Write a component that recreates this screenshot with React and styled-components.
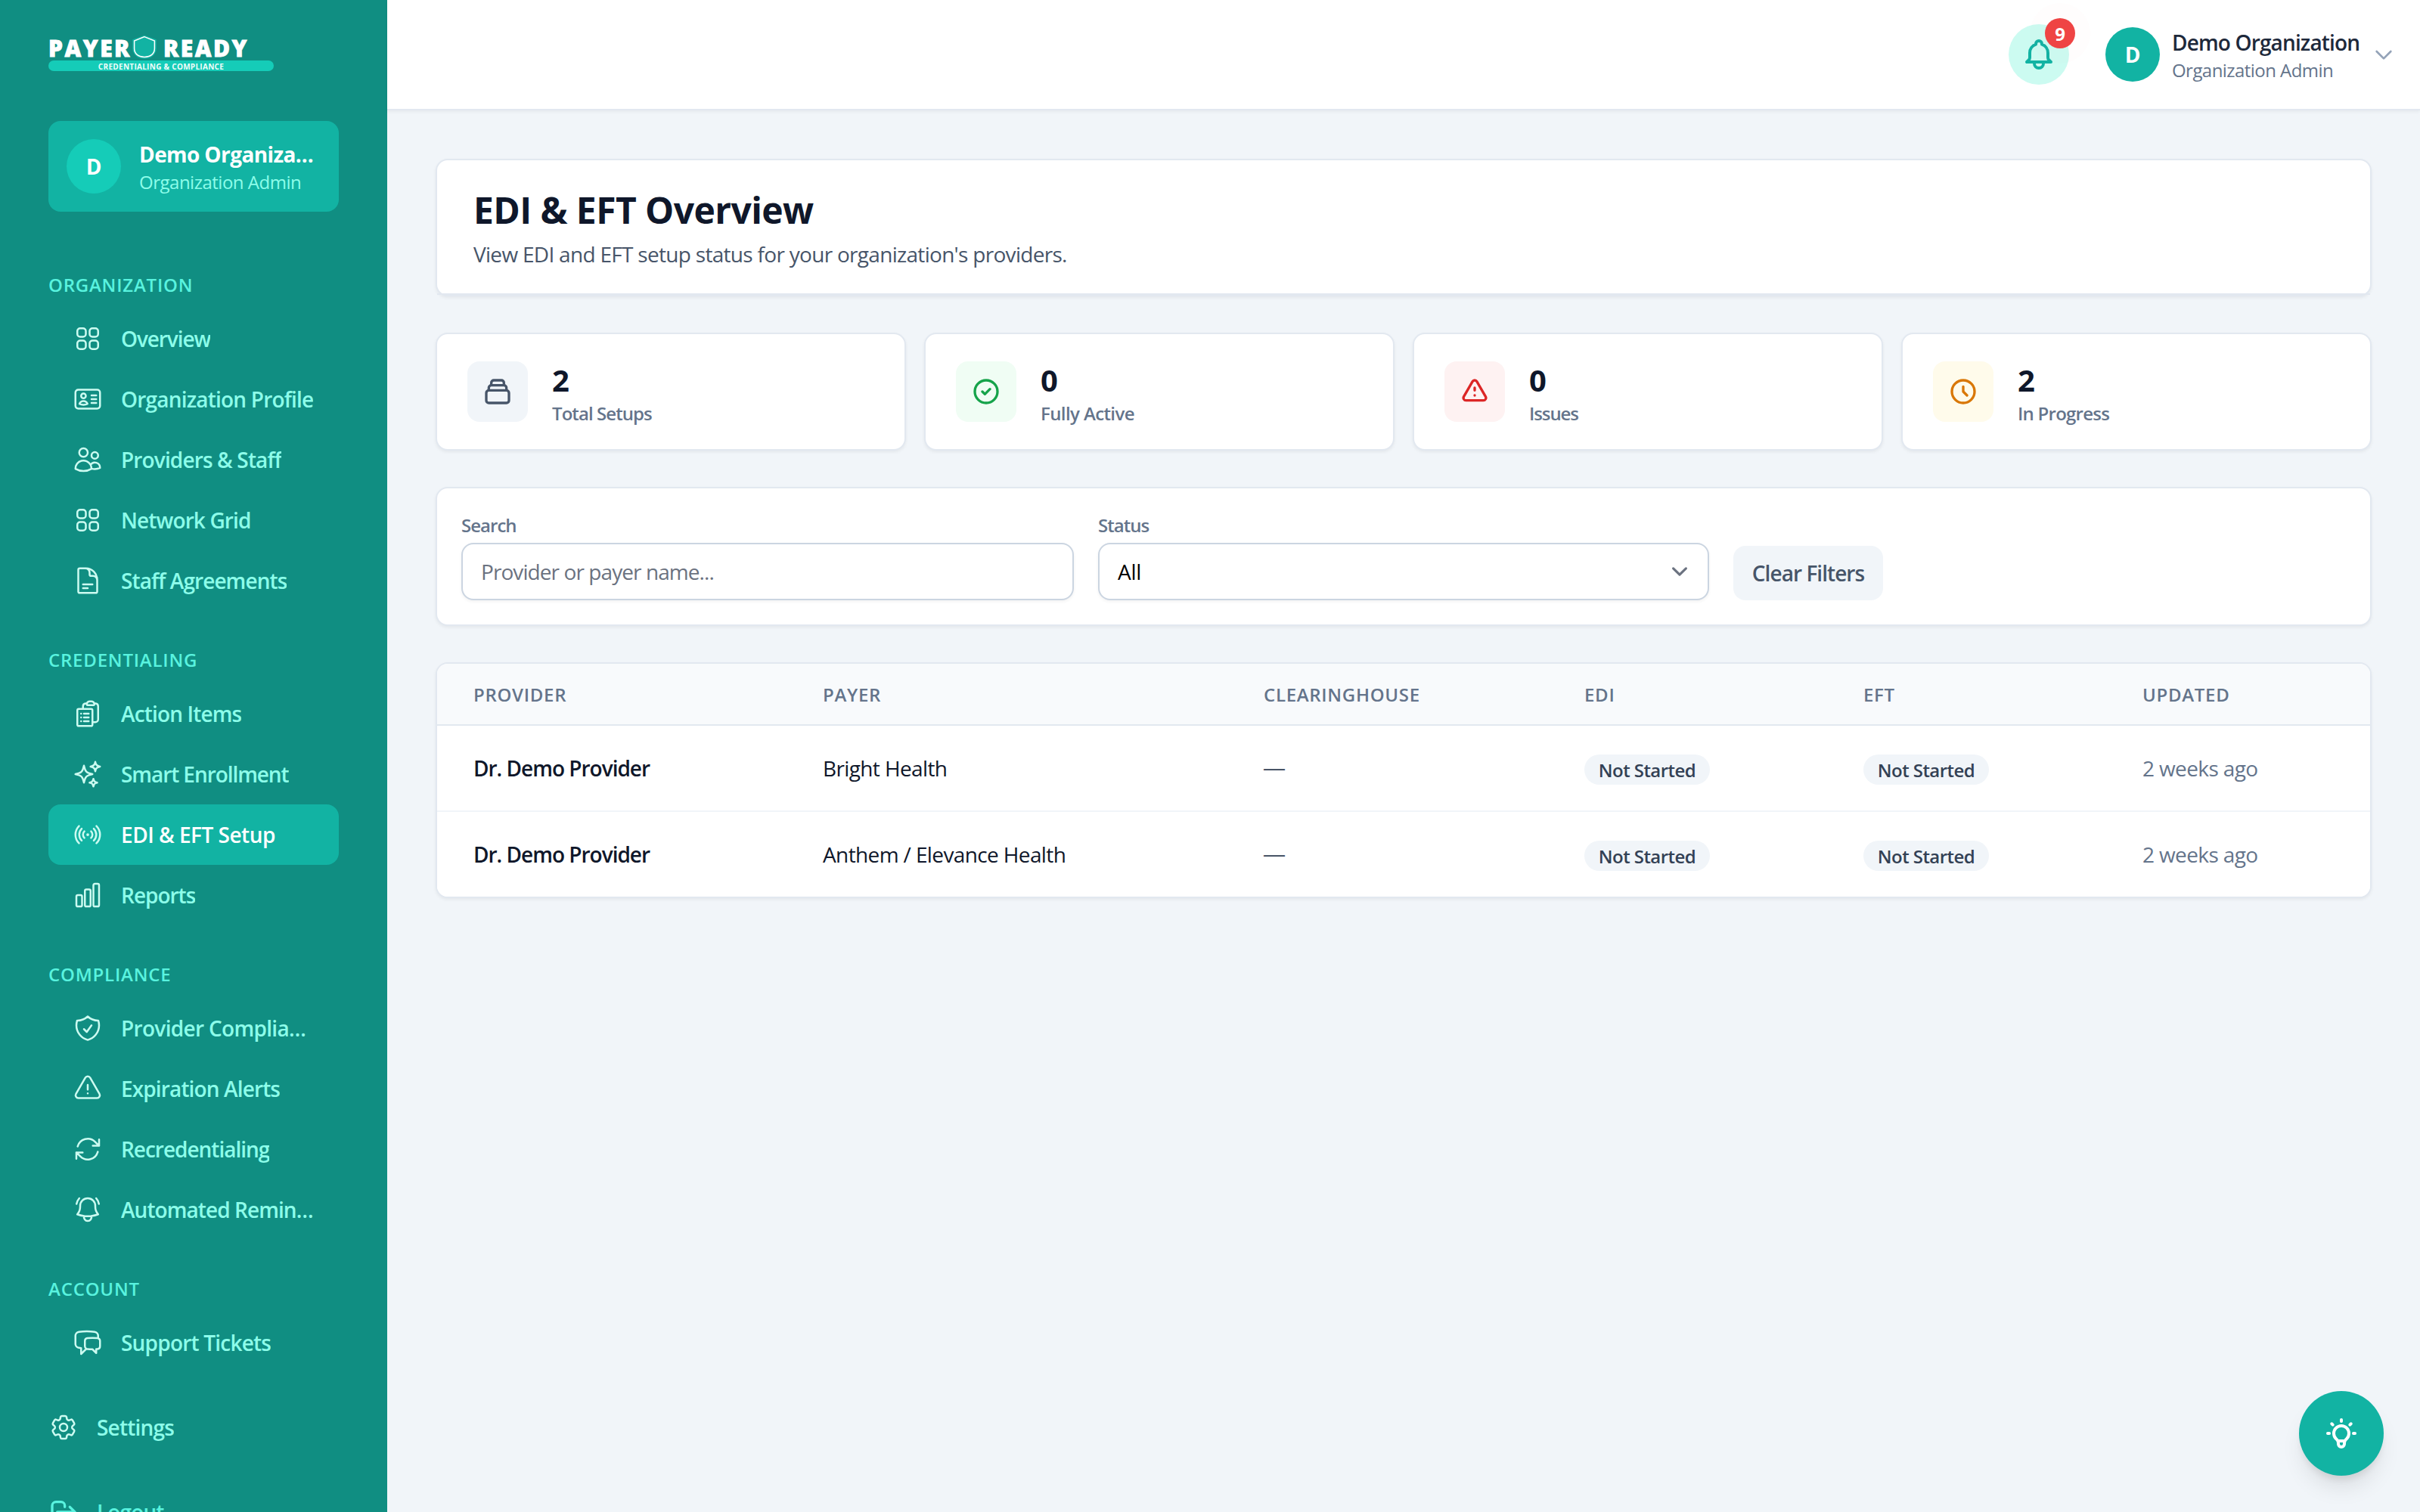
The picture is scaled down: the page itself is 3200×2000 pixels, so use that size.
import React from "react";
import styled, { createGlobalStyle, css, keyframes } from "styled-components";
import {
  HiOutlineSquares2X2,
  HiOutlineIdentification,
  HiOutlineUsers,
  HiOutlineDocumentText,
  HiOutlineClipboardDocumentList,
  HiOutlineSparkles,
  HiOutlineSignal,
  HiOutlineChartBar,
  HiOutlineShieldCheck,
  HiOutlineExclamationTriangle,
  HiOutlineArrowPath,
  HiOutlineBellAlert,
  HiOutlineChatBubbleLeftRight,
  HiOutlineCog6Tooth,
} from "react-icons/hi2";
import {
  HiOutlineBell,
  HiOutlineChevronDown,
  HiOutlineCollection,
  HiOutlineCheckCircle,
  HiOutlineExclamation,
  HiOutlineClock,
  HiOutlineLogout,
  HiOutlineLightBulb,
} from "react-icons/hi";

const GlobalStyle = createGlobalStyle`
  *, *::before, *::after {
    box-sizing: border-box;
  }
  body {
    margin: 0;
    background: #f1f5f9;
    color: #0f172a;
    font-family: "Open Sans", "Noto Sans", sans-serif;
    font-size: 28px;
    line-height: 40px;
  }
  h1, p {
    margin: 0;
  }
  svg {
    display: block;
    flex-shrink: 0;
  }
`;

const ellipsis = css`
  overflow: hidden;
  text-overflow: ellipsis;
  white-space: nowrap;
`;

const Page = styled.div`
  display: flex;
  height: 2000px;
  overflow: hidden;
`;

////////////////////////////Sidebar///////////////////////////////////////

const Sidebar = styled.aside`
  width: 512px;
  flex-shrink: 0;
  padding: 48px 64px 0;
  background: #108e82;
  overflow: hidden;
`;

const Brand = styled.div`
  width: 298px;
  height: 112px;
`;

const BrandWords = styled.div`
  display: flex;
  align-items: center;
  height: 32px;
  color: #ffffff;
  font-size: 30px;
  font-weight: 800;
  line-height: 32px;
  letter-spacing: 2.5px;
  -webkit-text-stroke: 0.8px #ffffff;
`;

const BrandShield = styled.svg`
  width: 32px;
  height: 32px;
  margin: -4px 9px 0 1px;
`;

const BrandTag = styled.div`
  height: 14px;
  border-radius: 7px;
  background: #15ccb8;
  color: #f0fdfa;
  font-size: 10px;
  font-weight: 700;
  line-height: 17px;
  letter-spacing: 0.29px;
  text-align: center;
`;

const OrgCard = styled.div`
  display: flex;
  align-items: center;
  gap: 24px;
  height: 120px;
  padding: 24px;
  border-radius: 16px;
  background: #12b3a3;
`;

const Avatar = styled.div`
  display: flex;
  align-items: center;
  justify-content: center;
  width: 72px;
  height: 72px;
  flex-shrink: 0;
  border-radius: 50%;
  background: ${(props) => (props.$light ? "#15ccb8" : "#12b3a3")};
  color: #ffffff;
  font-weight: 700;
`;

const OrgText = styled.div`
  min-width: 0;
`;

const OrgName = styled.p`
  ${ellipsis}
  color: #ffffff;
  font-weight: 700;
  letter-spacing: -0.6px;
`;

const OrgRole = styled.p`
  color: #8dfdea;
  font-size: 24px;
  line-height: 34px;
  height: 32px;
  letter-spacing: -0.49px;
`;

const NavGroup = styled.div`
  padding-top: 80px;

  & + & {
    padding-top: 48px;
  }
`;

const NavHeading = styled.p`
  height: 40px;
  margin-bottom: 8px;
  color: #59f3df;
  font-size: 24px;
  font-weight: 600;
  line-height: 33px;
  letter-spacing: 0.78px;
`;

const NavItem = styled.div`
  display: flex;
  align-items: center;
  gap: 24px;
  height: 80px;
  padding: 0 30px 0 ${(props) => (props.$root ? "0" : "32px")};
  margin-top: ${(props) => props.$gap || 0}px;
  border-radius: 16px;
  background: ${(props) => (props.$active ? "#12b3a3" : "transparent")};
  color: ${(props) => (props.$active ? "#ffffff" : "#8dfdea")};
  font-weight: 600;

  svg {
    width: 40px;
    height: 40px;
    color: ${(props) => (props.$muted ? "#59f3df" : "#ccfbf1")};
  }

  ${(props) =>
    props.$muted &&
    css`
      color: #59f3df;
    `}
`;

const NavLabel = styled.span`
  ${ellipsis}
  letter-spacing: ${(props) => props.$track ?? -0.88}px;
`;

////////////////////////////Top bar///////////////////////////////////////

const Content = styled.div`
  flex: 1;
  min-width: 0;
`;

const TopBar = styled.header`
  display: flex;
  align-items: center;
  justify-content: flex-end;
  height: 146px;
  padding-right: 32px;
  border-bottom: 2px solid #e2e8f0;
  background: #ffffff;
  box-shadow: 0 2px 4px rgba(0, 0, 0, 0.05);
`;

const BellButton = styled.div`
  position: relative;
  display: flex;
  align-items: center;
  justify-content: center;
  width: 80px;
  height: 80px;
  margin-right: 48px;
  border-radius: 50%;
  background: #ccfbf1;
  color: #12b3a3;
`;

const BellCount = styled.span`
  position: absolute;
  top: -8px;
  right: -8px;
  width: 40px;
  height: 40px;
  border-radius: 50%;
  background: #ef4444;
  box-shadow: 0 0 0 20px rgba(239, 68, 68, 0.012);
  color: #ffffff;
  font-size: 24px;
  font-weight: 700;
  line-height: 42px;
  text-align: center;
`;

const UserText = styled.div`
  width: 248px;
  margin: 0 16px;
  white-space: nowrap;
`;

const UserName = styled.p`
  color: #1e293b;
  font-weight: 600;
  letter-spacing: -0.85px;
`;

const UserRole = styled.p`
  color: #64748b;
  font-size: 24px;
  line-height: 34px;
  height: 32px;
  letter-spacing: -0.55px;
`;

const Chevron = styled(HiOutlineChevronDown)`
  width: 32px;
  height: 32px;
  color: #94a3b8;
`;

////////////////////////////Main///////////////////////////////////////

const Main = styled.main`
  display: flex;
  flex-direction: column;
  gap: 48px;
  padding: 64px;
`;

const Card = styled.section`
  border: 2px solid #e2e8f0;
  border-radius: 16px;
  background: #ffffff;
  box-shadow: 0 2px 4px rgba(0, 0, 0, 0.06);
`;

const CardHeader = styled.div`
  padding: 32px 48px;
  border-bottom: 2px solid #e2e8f0;
`;

const Title = styled.h1`
  height: 64px;
  color: #0f172a;
  font-size: 48px;
  font-weight: 700;
  line-height: 67px;
  letter-spacing: -0.57px;
`;

const Subtitle = styled.p`
  margin-top: 8px;
  color: #475569;
  letter-spacing: -0.7px;
`;

const Stats = styled.div`
  display: grid;
  grid-template-columns: repeat(4, 1fr);
  gap: 24px;
`;

const StatCard = styled(Card)`
  display: flex;
  align-items: center;
  gap: 32px;
  height: 156px;
  padding: 32px 40px;
`;

const StatIcon = styled.div`
  display: flex;
  align-items: center;
  justify-content: center;
  width: 80px;
  height: 80px;
  border-radius: 16px;
  background: ${(props) => props.$bg};
  color: ${(props) => props.$color};

  svg {
    width: 40px;
    height: 40px;
  }
`;

const StatValue = styled.p`
  height: 56px;
  color: #0f172a;
  font-size: 40px;
  font-weight: 700;
  line-height: 58px;
`;

const StatLabel = styled.p`
  height: 32px;
  color: #64748b;
  font-size: 24px;
  font-weight: 600;
  line-height: 34px;
  letter-spacing: ${(props) => props.$track}px;
`;

const Filters = styled(Card)`
  display: grid;
  grid-template-columns: 810px 808px 1fr;
  align-items: end;
  gap: 32px;
  padding: 32px;
`;

const FieldLabel = styled.label`
  display: block;
  height: 32px;
  margin-bottom: 8px;
  color: #64748b;
  font-size: 24px;
  font-weight: 600;
  line-height: 34px;
  letter-spacing: -0.98px;
`;

const Field = styled.div`
  display: flex;
  align-items: center;
  justify-content: space-between;
  height: 76px;
  padding: 0 16px 0 24px;
  border: 2px solid #cbd5e1;
  border-radius: 16px;
  background: #ffffff;
  box-shadow: 0 2px 4px rgba(0, 0, 0, 0.05);
  color: ${(props) => (props.$placeholder ? "#6b7280" : "#000000")};
  letter-spacing: ${(props) => (props.$placeholder ? -0.92 : -0.3)}px;
`;

const SelectArrow = styled.svg`
  width: 42px;
  height: 42px;
`;

const ClearButton = styled.button`
  justify-self: start;
  width: 198px;
  height: 72px;
  padding: 0;
  border: 0;
  border-radius: 16px;
  background: #f1f5f9;
  color: #475569;
  font: inherit;
  font-weight: 600;
  letter-spacing: -0.95px;
`;

const TableCard = styled(Card)`
  overflow: hidden;
`;

const Row = styled.div`
  display: grid;
  grid-template-columns: 462px 583px 424px 369px 369px 1fr;
  align-items: center;
  height: ${(props) => (props.$head ? 82 : 112)}px;
  background: ${(props) => (props.$head ? "#f8fafc" : "#ffffff")};
  border-bottom: ${(props) => (props.$head ? "2px solid #e2e8f0" : "0")};

  & + &:nth-child(n + 3) {
    height: 114px;
    border-top: 2px solid #f1f5f9;
  }
`;

const HeadCell = styled.div`
  height: 32px;
  padding: 0 48px;
  color: #64748b;
  font-size: 24px;
  font-weight: 600;
  line-height: 34px;
  letter-spacing: 0.7px;
`;

const Cell = styled.div`
  padding: 0 48px;
  white-space: nowrap;
  color: ${(props) => (props.$muted ? "#64748b" : "#0f172a")};
  font-weight: ${(props) => (props.$strong ? 600 : 400)};
  letter-spacing: ${(props) => (props.$strong ? -1 : -0.62)}px;
`;

const EmptyCell = styled(Cell)`
  color: #334155;
  font-family: "Liberation Sans", Arial, sans-serif;
  letter-spacing: 0;
`;

const Pill = styled.span`
  display: block;
  width: 166px;
  height: 40px;
  margin-top: 4px;
  border-radius: 20px;
  background: #f1f5f9;
  color: #334155;
  font-size: 24px;
  font-weight: 600;
  line-height: 42px;
  letter-spacing: -0.55px;
  text-align: center;
`;

const pop = keyframes`
  from { transform: scale(1); }
  to { transform: scale(1.05); }
`;

const HelpButton = styled.button`
  position: fixed;
  right: 48px;
  bottom: 48px;
  display: flex;
  align-items: center;
  justify-content: center;
  width: 112px;
  height: 112px;
  padding: 0;
  border: 0;
  border-radius: 50%;
  background: #12b3a3;
  color: #ffffff;
  box-shadow: 0 20px 30px -6px rgba(0, 0, 0, 0.1), 0 8px 12px -4px rgba(0, 0, 0, 0.1);

  &:hover {
    animation: ${pop} 0.2s ease forwards;
  }
`;

const groups = [
  {
    title: "ORGANIZATION",
    items: [
      { label: "Overview", icon: HiOutlineSquares2X2, track: -1.1 },
      { label: "Organization Profile", icon: HiOutlineIdentification, track: -0.8 },
      { label: "Providers & Staff", icon: HiOutlineUsers, track: -0.86 },
      { label: "Network Grid", icon: HiOutlineSquares2X2, track: -0.88 },
      { label: "Staff Agreements", icon: HiOutlineDocumentText, track: -0.91 },
    ],
  },
  {
    title: "CREDENTIALING",
    items: [
      { label: "Action Items", icon: HiOutlineClipboardDocumentList, track: -0.85 },
      { label: "Smart Enrollment", icon: HiOutlineSparkles, track: -1.07 },
      { label: "EDI & EFT Setup", icon: HiOutlineSignal, track: -0.5, active: true },
      { label: "Reports", icon: HiOutlineChartBar, track: -1 },
    ],
  },
  {
    title: "COMPLIANCE",
    items: [
      { label: "Provider Compliance", icon: HiOutlineShieldCheck, track: -0.68 },
      { label: "Expiration Alerts", icon: HiOutlineExclamationTriangle, track: -0.87 },
      { label: "Recredentialing", icon: HiOutlineArrowPath, track: -1.02 },
      { label: "Automated Reminders", icon: HiOutlineBellAlert, track: -0.93 },
    ],
  },
  {
    title: "ACCOUNT",
    items: [{ label: "Support Tickets", icon: HiOutlineChatBubbleLeftRight, track: -0.79 }],
  },
];

const stats = [
  { value: 2, label: "Total Setups", icon: HiOutlineCollection, bg: "#f1f5f9", color: "#475569", track: -0.93 },
  { value: 0, label: "Fully Active", icon: HiOutlineCheckCircle, bg: "#f0fdf4", color: "#16a34a", track: -0.6 },
  { value: 0, label: "Issues", icon: HiOutlineExclamation, bg: "#fef2f2", color: "#dc2626", track: -1.1 },
  { value: 2, label: "In Progress", icon: HiOutlineClock, bg: "#fffbeb", color: "#d97706", track: -0.75 },
];

const columns = ["PROVIDER", "PAYER", "CLEARINGHOUSE", "EDI", "EFT", "UPDATED"];

const setups = [
  { provider: "Dr. Demo Provider", payer: "Bright Health", edi: "Not Started", eft: "Not Started", updated: "2 weeks ago" },
  { provider: "Dr. Demo Provider", payer: "Anthem / Elevance Health", edi: "Not Started", eft: "Not Started", updated: "2 weeks ago" },
];

function Logo() {
  return (
    <Brand>
      <BrandWords>
        <span>PAYER</span>
        <BrandShield viewBox="0 0 32 32" fill="none">
          <path d="M16 2.5 30 7.5V18c0 7-6 12-14 12S2 25 2 18V7.5Z" stroke="#12b3a3" strokeWidth="3.4" />
          <path d="M16 2.6 29.4 8V18c0 6.5-4.5 11.4-13.4 11.4S2.6 24.5 2.6 18V8Z" fill="#12b3a3" stroke="#ffffff" strokeWidth="1.5" />
        </BrandShield>
        <span>READY</span>
      </BrandWords>
      <BrandTag>CREDENTIALING &amp; COMPLIANCE</BrandTag>
    </Brand>
  );
}

export default function App() {
  return (
    <>
      <GlobalStyle />
      <Page>
        <Sidebar>
          <Logo />
          <OrgCard>
            <Avatar $light>D</Avatar>
            <OrgText>
              <OrgName>Demo Organization</OrgName>
              <OrgRole>Organization Admin</OrgRole>
            </OrgText>
          </OrgCard>

          {groups.map((group) => (
            <NavGroup key={group.title}>
              <NavHeading>{group.title}</NavHeading>
              {group.items.map((item) => (
                <NavItem key={item.label} $active={item.active}>
                  <item.icon />
                  <NavLabel $track={item.track}>{item.label}</NavLabel>
                </NavItem>
              ))}
            </NavGroup>
          ))}

          <NavItem $root $gap={32}>
            <HiOutlineCog6Tooth />
            <NavLabel $track={-0.78}>Settings</NavLabel>
          </NavItem>
          <NavItem $root $muted $gap={32}>
            <HiOutlineLogout />
            <NavLabel>Logout</NavLabel>
          </NavItem>
        </Sidebar>

        <Content>
          <TopBar>
            <BellButton>
              <HiOutlineBell size={48} />
              <BellCount>9</BellCount>
            </BellButton>
            <Avatar>D</Avatar>
            <UserText>
              <UserName>Demo Organization</UserName>
              <UserRole>Organization Admin</UserRole>
            </UserText>
            <Chevron />
          </TopBar>

          <Main>
            <Card>
              <CardHeader>
                <Title>EDI &amp; EFT Overview</Title>
                <Subtitle>View EDI and EFT setup status for your organization's providers.</Subtitle>
              </CardHeader>
            </Card>

            <Stats>
              {stats.map((stat) => (
                <StatCard key={stat.label}>
                  <StatIcon $bg={stat.bg} $color={stat.color}>
                    <stat.icon />
                  </StatIcon>
                  <div>
                    <StatValue>{stat.value}</StatValue>
                    <StatLabel $track={stat.track}>{stat.label}</StatLabel>
                  </div>
                </StatCard>
              ))}
            </Stats>

            <Filters>
              <div>
                <FieldLabel>Search</FieldLabel>
                <Field $placeholder>Provider or payer name...</Field>
              </div>
              <div>
                <FieldLabel>Status</FieldLabel>
                <Field>
                  All
                  <SelectArrow viewBox="0 0 20 20" fill="none">
                    <path d="M6 8l4 4 4-4" stroke="#6b7280" strokeWidth="1.5" strokeLinecap="round" strokeLinejoin="round" />
                  </SelectArrow>
                </Field>
              </div>
              <ClearButton>Clear Filters</ClearButton>
            </Filters>

            <TableCard>
              <Row $head>
                {columns.map((name) => (
                  <HeadCell key={name}>{name}</HeadCell>
                ))}
              </Row>
              {setups.map((setup) => (
                <Row key={setup.payer}>
                  <Cell $strong>{setup.provider}</Cell>
                  <Cell>{setup.payer}</Cell>
                  <EmptyCell>—</EmptyCell>
                  <Cell>
                    <Pill>{setup.edi}</Pill>
                  </Cell>
                  <Cell>
                    <Pill>{setup.eft}</Pill>
                  </Cell>
                  <Cell $muted>{setup.updated}</Cell>
                </Row>
              ))}
            </TableCard>
          </Main>
        </Content>
      </Page>

      <HelpButton>
        <HiOutlineLightBulb size={48} />
      </HelpButton>
    </>
  );
}
